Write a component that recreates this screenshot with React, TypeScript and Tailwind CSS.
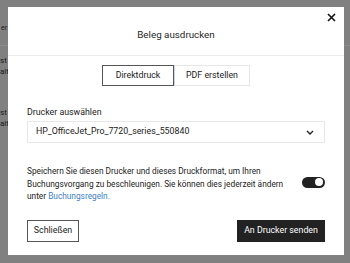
import React from "react";

export default function App() {
  const font = { fontFamily: 'Roboto, "Liberation Sans", Arial, sans-serif' };
  return (
    <div className="relative w-[350px] h-[263px] overflow-hidden bg-[#808080]" style={font}>
      {/* underlying page, dimmed */}
      <div className="absolute inset-0 flex flex-col text-[7px] text-[#1a1a1a]">
        <div className="h-[24px]" />
        <div className="pl-[1px] leading-[8px]">er</div>
        <div className="h-[13px]" />
        <div className="h-px bg-[#8c8c8c]" />
        <div className="h-[9px]" />
        <div className="leading-[11px] text-[8px]">st</div>
        <div className="leading-[11px] text-[8px]">alt:</div>
        <div className="h-[30px]" />
        <div className="leading-[11px] text-[8px]">st</div>
        <div className="leading-[11px] text-[8px]">alt:</div>
      </div>

      {/* modal */}
      <div className="absolute left-[8px] top-[7px] w-[336px] h-[248px] bg-white flex flex-col text-[#222]">
        <div className="relative pt-[22px] pb-[14px] border-b border-[#ececec] flex justify-center">
          <div className="text-[9.8px] leading-[12px] text-[#1f1f1f]">Beleg ausdrucken</div>
          <svg
            className="absolute right-[8px] top-[6px]"
            width="9"
            height="9"
            viewBox="0 0 9 9"
            fill="none"
            stroke="#111"
            strokeWidth="1.6"
          >
            <path d="M1 1L8 8M8 1L1 8" />
          </svg>
        </div>

        <div className="mt-[9px] flex justify-center text-[8.8px]">
          <div className="w-[72px] h-[21px] border border-[#555] flex items-center justify-center">
            Direktdruck
          </div>
          <div className="w-[76px] h-[21px] border border-[#e6e6e6] border-l-[#c9d8ec] flex items-center justify-center">
            PDF erstellen
          </div>
        </div>

        <div className="px-[19px] mt-[20px] flex flex-col">
          <div className="text-[8.8px] leading-[12px]">Drucker auswählen</div>
          <div className="mt-[3px] h-[22px] border border-[#e8e8e8] flex items-center justify-between pl-[8px] pr-[10px] text-[8.8px]">
            <span>HP_OfficeJet_Pro_7720_series_550840</span>
            <svg width="8" height="5" viewBox="0 0 8 5" fill="none" stroke="#222" strokeWidth="1.4">
              <path d="M1 1L4 4L7 1" />
            </svg>
          </div>

          <div className="mt-[22px] flex items-center justify-between">
            <p className="text-[8.3px] leading-[12.5px] shrink-0 whitespace-nowrap">
              Speichern Sie diesen Drucker und dieses Druckformat, um Ihren
              <br />
              Buchungsvorgang zu beschleunigen. Sie können dies jederzeit ändern
              <br />
              unter <span className="text-[#3b7fc8]">Buchungsregeln.</span>
            </p>
            <div className="shrink-0 w-[23px] h-[11px] rounded-full bg-[#222] flex items-center justify-end pr-[2px] mb-[3px]">
              <div className="w-[8px] h-[8px] rounded-full bg-white" />
            </div>
          </div>

          <div className="mt-[17px] flex justify-between text-[8.8px]">
            <div className="w-[52px] h-[22px] border border-[#555] flex items-center justify-center">
              Schließen
            </div>
            <div className="w-[88px] h-[22px] bg-[#222] text-white flex items-center justify-center">
              An Drucker senden
            </div>
          </div>
        </div>
      </div>
    </div>
  );
}
